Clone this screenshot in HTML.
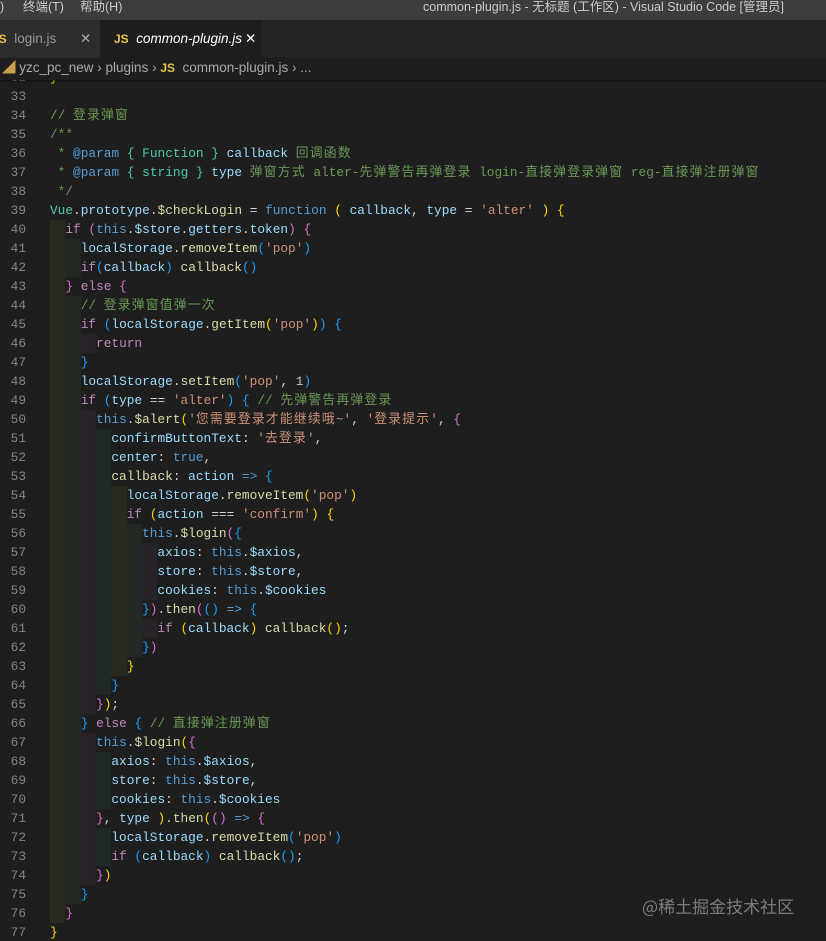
<!DOCTYPE html>
<html><head><meta charset="utf-8">
<style>
*{margin:0;padding:0;box-sizing:border-box}
body{width:826px;height:941px;overflow:hidden;background:#1e1e1e;font-family:"Liberation Sans","Noto Sans CJK SC",sans-serif;position:relative}
.title{position:absolute;left:0;top:0;width:826px;height:20px;background:#3c3c3c;color:#ccc;font-size:12.5px;line-height:16px}
.title span{position:absolute;top:-1px}
.tabs{position:absolute;left:0;top:20px;width:826px;height:38px;background:#252526}
.tab{position:absolute;top:0;height:38px;line-height:38px;font-size:13.5px}
.js{color:#e8c34a;font-weight:bold;font-size:12px;font-family:"Liberation Sans",sans-serif}
.crumb{position:absolute;left:0;top:58px;width:826px;height:22px;background:#1e1e1e;color:#a9a9a9;font-size:13.5px;line-height:20px;box-shadow:0 1px 2px rgba(0,0,0,0.6);z-index:2}
.code{position:absolute;left:0;top:80px;width:826px;height:861px;overflow:hidden}
.inner{position:absolute;top:-12px;left:0}
.ln{position:relative;height:19px;line-height:19px;font-family:"Liberation Mono","Noto Sans CJK SC",monospace;font-size:12.8px;white-space:pre;color:#d4d4d4}
.ln .no{position:absolute;left:0;width:26px;text-align:right;color:#858585}
.ln .tx{position:absolute;left:50px}
.z{letter-spacing:1.2px}
i{display:inline-block;width:2ch;height:19px;vertical-align:top;font-style:normal}
i.a{background:rgba(255,255,64,0.05)}
i.b{background:rgba(127,255,127,0.05)}
i.c{background:rgba(255,127,255,0.05)}
i.d{background:rgba(79,236,236,0.05)}
.k{color:#c586c0}.B{color:#569cd6}.v{color:#9cdcfe}.f{color:#dcdcaa}.s{color:#ce9178}.c{color:#6a9955}.t{color:#4ec9b0}.n{color:#b5cea8}
.y{color:#ffd700}.m{color:#da70d6}.l{color:#179fff}
.wm{position:absolute;left:642px;top:893px;font-size:17px;color:rgba(200,200,200,0.55);font-family:"Noto Sans CJK SC",sans-serif}
</style></head><body>
<div class="title">
<span style="left:0">)</span><span style="left:23px">终端(T)</span><span style="left:80px">帮助(H)</span>
<span style="left:423px">common-plugin.js - 无标题 (工作区) - Visual Studio Code [管理员]</span>
</div>
<div class="tabs">
<div class="tab" style="left:-8px;width:108px;background:#2d2d2d;color:#969696"><span class="js">JS</span>&nbsp; login.js<span style="position:absolute;left:88px;color:#aaa">✕</span></div>
<div class="tab" style="left:100px;width:162px;background:#1e1e1e;color:#fff"><span class="js" style="margin-left:14px">JS</span>&nbsp; <i style="font-style:italic;width:auto;height:auto;vertical-align:baseline">common-plugin.js</i><span style="position:absolute;left:145px">✕</span></div>
</div>
<div class="crumb"><span style="color:#c9a04b;margin-left:2px">◢</span> yzc_pc_new › plugins › <span class="js">JS</span>&nbsp; common-plugin.js › ...</div>
<div class="code"><div class="inner">
<div class="ln"><span class="no">32</span><span class="tx"><span class="y">}</span></span></div>
<div class="ln"><span class="no">33</span><span class="tx"></span></div>
<div class="ln"><span class="no">34</span><span class="tx"><span class="c">// <span class="z">登录弹窗</span></span></span></div>
<div class="ln"><span class="no">35</span><span class="tx"><span class="c">/**</span></span></div>
<div class="ln"><span class="no">36</span><span class="tx"><span class="c"> * </span><span class="B">@param</span> <span class="t">{ Function }</span> <span class="v">callback</span><span class="c"> <span class="z">回调函数</span></span></span></div>
<div class="ln"><span class="no">37</span><span class="tx"><span class="c"> * </span><span class="B">@param</span> <span class="t">{ string }</span> <span class="v">type</span><span class="c"> <span class="z">弹窗方式</span> alter-<span class="z">先弹警告再弹登录</span> login-<span class="z">直接弹登录弹窗</span> reg-<span class="z">直接弹注册弹窗</span></span></span></div>
<div class="ln"><span class="no">38</span><span class="tx"><span class="c"> */</span></span></div>
<div class="ln"><span class="no">39</span><span class="tx"><span class="t">Vue</span>.<span class="v">prototype</span>.<span class="f">$checkLogin</span> = <span class="B">function</span> <span class="y">(</span> <span class="v">callback</span>, <span class="v">type</span> = <span class="s">'alter'</span> <span class="y">)</span> <span class="y">{</span></span></div>
<div class="ln"><span class="no">40</span><span class="tx"><i class="a"></i><span class="k">if</span> <span class="m">(</span><span class="B">this</span>.<span class="v">$store</span>.<span class="v">getters</span>.<span class="v">token</span><span class="m">)</span> <span class="m">{</span></span></div>
<div class="ln"><span class="no">41</span><span class="tx"><i class="a"></i><i class="b"></i><span class="v">localStorage</span>.<span class="f">removeItem</span><span class="l">(</span><span class="s">'pop'</span><span class="l">)</span></span></div>
<div class="ln"><span class="no">42</span><span class="tx"><i class="a"></i><i class="b"></i><span class="k">if</span><span class="l">(</span><span class="v">callback</span><span class="l">)</span> <span class="f">callback</span><span class="l">()</span></span></div>
<div class="ln"><span class="no">43</span><span class="tx"><i class="a"></i><span class="m">}</span> <span class="k">else</span> <span class="m">{</span></span></div>
<div class="ln"><span class="no">44</span><span class="tx"><i class="a"></i><i class="b"></i><span class="c">// <span class="z">登录弹窗值弹一次</span></span></span></div>
<div class="ln"><span class="no">45</span><span class="tx"><i class="a"></i><i class="b"></i><span class="k">if</span> <span class="l">(</span><span class="v">localStorage</span>.<span class="f">getItem</span><span class="y">(</span><span class="s">'pop'</span><span class="y">)</span><span class="l">)</span> <span class="l">{</span></span></div>
<div class="ln"><span class="no">46</span><span class="tx"><i class="a"></i><i class="b"></i><i class="c"></i><span class="k">return</span></span></div>
<div class="ln"><span class="no">47</span><span class="tx"><i class="a"></i><i class="b"></i><span class="l">}</span></span></div>
<div class="ln"><span class="no">48</span><span class="tx"><i class="a"></i><i class="b"></i><span class="v">localStorage</span>.<span class="f">setItem</span><span class="l">(</span><span class="s">'pop'</span>, <span class="n">1</span><span class="l">)</span></span></div>
<div class="ln"><span class="no">49</span><span class="tx"><i class="a"></i><i class="b"></i><span class="k">if</span> <span class="l">(</span><span class="v">type</span> == <span class="s">'alter'</span><span class="l">)</span> <span class="l">{</span> <span class="c">// <span class="z">先弹警告再弹登录</span></span></span></div>
<div class="ln"><span class="no">50</span><span class="tx"><i class="a"></i><i class="b"></i><i class="c"></i><span class="B">this</span>.<span class="f">$alert</span><span class="y">(</span><span class="s">'<span class="z">您需要登录才能继续哦</span>~'</span>, <span class="s">'<span class="z">登录提示</span>'</span>, <span class="m">{</span></span></div>
<div class="ln"><span class="no">51</span><span class="tx"><i class="a"></i><i class="b"></i><i class="c"></i><i class="d"></i><span class="v">confirmButtonText</span>: <span class="s">'<span class="z">去登录</span>'</span>,</span></div>
<div class="ln"><span class="no">52</span><span class="tx"><i class="a"></i><i class="b"></i><i class="c"></i><i class="d"></i><span class="v">center</span>: <span class="B">true</span>,</span></div>
<div class="ln"><span class="no">53</span><span class="tx"><i class="a"></i><i class="b"></i><i class="c"></i><i class="d"></i><span class="f">callback</span>: <span class="v">action</span> <span class="B">=&gt;</span> <span class="l">{</span></span></div>
<div class="ln"><span class="no">54</span><span class="tx"><i class="a"></i><i class="b"></i><i class="c"></i><i class="d"></i><i class="a"></i><span class="v">localStorage</span>.<span class="f">removeItem</span><span class="y">(</span><span class="s">'pop'</span><span class="y">)</span></span></div>
<div class="ln"><span class="no">55</span><span class="tx"><i class="a"></i><i class="b"></i><i class="c"></i><i class="d"></i><i class="a"></i><span class="k">if</span> <span class="y">(</span><span class="v">action</span> === <span class="s">'confirm'</span><span class="y">)</span> <span class="y">{</span></span></div>
<div class="ln"><span class="no">56</span><span class="tx"><i class="a"></i><i class="b"></i><i class="c"></i><i class="d"></i><i class="a"></i><i class="b"></i><span class="B">this</span>.<span class="f">$login</span><span class="m">(</span><span class="l">{</span></span></div>
<div class="ln"><span class="no">57</span><span class="tx"><i class="a"></i><i class="b"></i><i class="c"></i><i class="d"></i><i class="a"></i><i class="b"></i><i class="c"></i><span class="v">axios</span>: <span class="B">this</span>.<span class="v">$axios</span>,</span></div>
<div class="ln"><span class="no">58</span><span class="tx"><i class="a"></i><i class="b"></i><i class="c"></i><i class="d"></i><i class="a"></i><i class="b"></i><i class="c"></i><span class="v">store</span>: <span class="B">this</span>.<span class="v">$store</span>,</span></div>
<div class="ln"><span class="no">59</span><span class="tx"><i class="a"></i><i class="b"></i><i class="c"></i><i class="d"></i><i class="a"></i><i class="b"></i><i class="c"></i><span class="v">cookies</span>: <span class="B">this</span>.<span class="v">$cookies</span></span></div>
<div class="ln"><span class="no">60</span><span class="tx"><i class="a"></i><i class="b"></i><i class="c"></i><i class="d"></i><i class="a"></i><i class="b"></i><span class="l">}</span><span class="m">)</span>.<span class="f">then</span><span class="m">(</span><span class="l">()</span> <span class="B">=&gt;</span> <span class="l">{</span></span></div>
<div class="ln"><span class="no">61</span><span class="tx"><i class="a"></i><i class="b"></i><i class="c"></i><i class="d"></i><i class="a"></i><i class="b"></i><i class="c"></i><span class="k">if</span> <span class="y">(</span><span class="v">callback</span><span class="y">)</span> <span class="f">callback</span><span class="y">()</span>;</span></div>
<div class="ln"><span class="no">62</span><span class="tx"><i class="a"></i><i class="b"></i><i class="c"></i><i class="d"></i><i class="a"></i><i class="b"></i><span class="l">}</span><span class="m">)</span></span></div>
<div class="ln"><span class="no">63</span><span class="tx"><i class="a"></i><i class="b"></i><i class="c"></i><i class="d"></i><i class="a"></i><span class="y">}</span></span></div>
<div class="ln"><span class="no">64</span><span class="tx"><i class="a"></i><i class="b"></i><i class="c"></i><i class="d"></i><span class="l">}</span></span></div>
<div class="ln"><span class="no">65</span><span class="tx"><i class="a"></i><i class="b"></i><i class="c"></i><span class="m">}</span><span class="y">)</span>;</span></div>
<div class="ln"><span class="no">66</span><span class="tx"><i class="a"></i><i class="b"></i><span class="l">}</span> <span class="k">else</span> <span class="l">{</span> <span class="c">// <span class="z">直接弹注册弹窗</span></span></span></div>
<div class="ln"><span class="no">67</span><span class="tx"><i class="a"></i><i class="b"></i><i class="c"></i><span class="B">this</span>.<span class="f">$login</span><span class="y">(</span><span class="m">{</span></span></div>
<div class="ln"><span class="no">68</span><span class="tx"><i class="a"></i><i class="b"></i><i class="c"></i><i class="d"></i><span class="v">axios</span>: <span class="B">this</span>.<span class="v">$axios</span>,</span></div>
<div class="ln"><span class="no">69</span><span class="tx"><i class="a"></i><i class="b"></i><i class="c"></i><i class="d"></i><span class="v">store</span>: <span class="B">this</span>.<span class="v">$store</span>,</span></div>
<div class="ln"><span class="no">70</span><span class="tx"><i class="a"></i><i class="b"></i><i class="c"></i><i class="d"></i><span class="v">cookies</span>: <span class="B">this</span>.<span class="v">$cookies</span></span></div>
<div class="ln"><span class="no">71</span><span class="tx"><i class="a"></i><i class="b"></i><i class="c"></i><span class="m">}</span>, <span class="v">type</span> <span class="y">)</span>.<span class="f">then</span><span class="y">(</span><span class="m">()</span> <span class="B">=&gt;</span> <span class="m">{</span></span></div>
<div class="ln"><span class="no">72</span><span class="tx"><i class="a"></i><i class="b"></i><i class="c"></i><i class="d"></i><span class="v">localStorage</span>.<span class="f">removeItem</span><span class="l">(</span><span class="s">'pop'</span><span class="l">)</span></span></div>
<div class="ln"><span class="no">73</span><span class="tx"><i class="a"></i><i class="b"></i><i class="c"></i><i class="d"></i><span class="k">if</span> <span class="l">(</span><span class="v">callback</span><span class="l">)</span> <span class="f">callback</span><span class="l">()</span>;</span></div>
<div class="ln"><span class="no">74</span><span class="tx"><i class="a"></i><i class="b"></i><i class="c"></i><span class="m">}</span><span class="y">)</span></span></div>
<div class="ln"><span class="no">75</span><span class="tx"><i class="a"></i><i class="b"></i><span class="l">}</span></span></div>
<div class="ln"><span class="no">76</span><span class="tx"><i class="a"></i><span class="m">}</span></span></div>
<div class="ln"><span class="no">77</span><span class="tx"><span class="y">}</span></span></div>
</div></div>
<div class="wm">@稀土掘金技术社区</div>
</body></html>
